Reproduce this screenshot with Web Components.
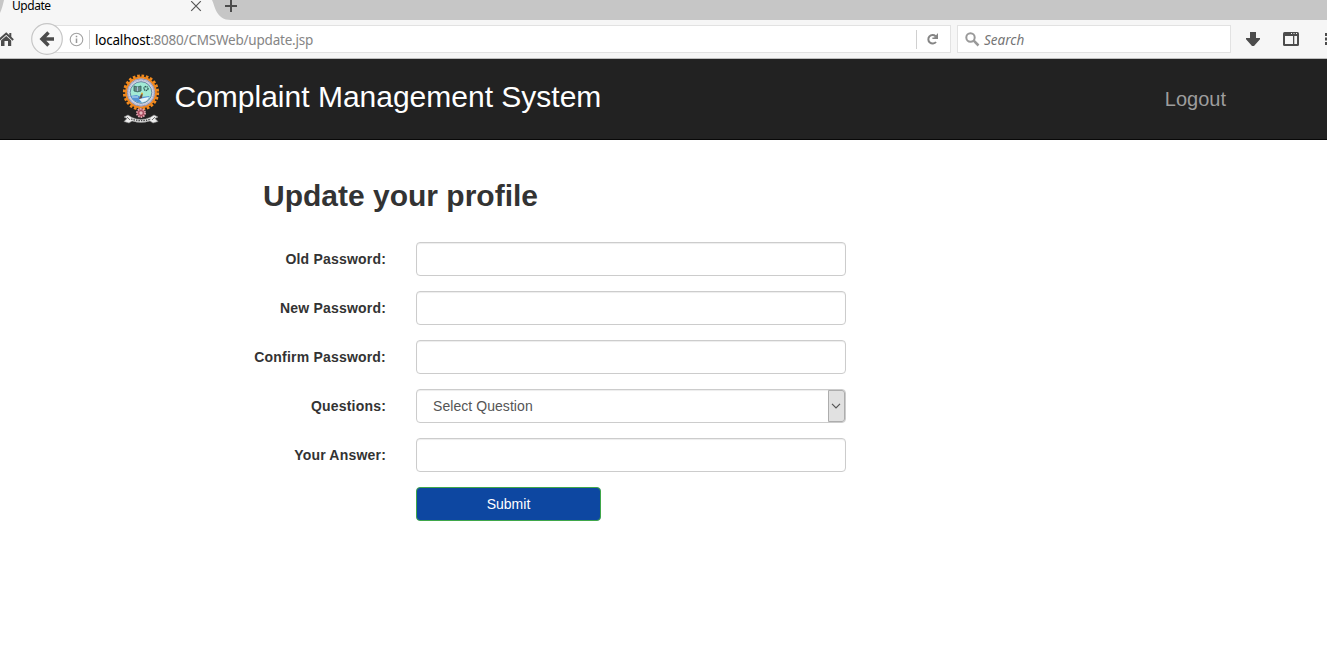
<!DOCTYPE html>
<html lang="en">
<head>
<meta charset="utf-8">
<title>Update</title>
<style>
html,body{margin:0;height:100%;overflow:hidden;background:#fff}
body{font-family:"Liberation Sans",Arial,sans-serif;color:#333}
</style>
</head>
<body>
<browser-window>
  <tab-strip slot="chrome" label="Update"></tab-strip>
  <address-bar slot="chrome" host="localhost" path=":8080/CMSWeb/update.jsp"></address-bar>
  <site-navbar><college-logo slot="logo"></college-logo>Complaint Management System<span slot="action">Logout</span></site-navbar>
  <profile-form>
    <span slot="title">Update your profile</span>
    <form-row label="Old Password:"><text-field></text-field></form-row>
    <form-row label="New Password:"><text-field></text-field></form-row>
    <form-row label="Confirm Password:"><text-field></text-field></form-row>
    <form-row label="Questions:"><select-field>Select Question</select-field></form-row>
    <form-row label="Your Answer:"><text-field></text-field></form-row>
    <form-row><submit-button>Submit</submit-button></form-row>
  </profile-form>
</browser-window>
<script>
const define = (name, render) => customElements.define(name, class extends HTMLElement {
  constructor() { super(); this.attachShadow({mode: 'open'}); }
  connectedCallback() { this.shadowRoot.innerHTML = '<style>:host,*{box-sizing:border-box}svg{display:block;flex:none}</style>' + render(this); }
});

define('browser-window', () => `
<style>:host{display:flex;flex-direction:column;height:666px;width:1327px;overflow:hidden}
main{flex:1;background:#fff}</style>
<slot name="chrome"></slot><main><slot></slot></main>`);

define('tab-strip', el => `
<style>
:host{display:grid;height:20px;background:#c6c6c6;font-family:"Noto Sans","Open Sans",sans-serif}
.shape,.row{grid-area:1/1}
.row{display:flex;height:20px}
.label{font-size:12px;line-height:12px;height:12px;color:#000;padding-left:12px;width:190px;letter-spacing:-.45px}
.close{margin-top:1px}.add{margin-left:22px}
</style>
<svg class="shape" width="250" height="20"><path d="M0 13C2 9 3 4 4 0H212C215 6 216 20 231 20H0Z" fill="#f6f6f6"/></svg>
<div class="row"><span class="label">${el.getAttribute('label')}</span>
<svg class="close" width="12" height="12"><path d="M1.2.2l9.6 9.6M10.8.2L1.2 9.800" stroke="#555" stroke-width="1.200"/></svg>
<svg class="add" width="14" height="14"><path d="M1 6h12M7 0v12" stroke="#4c4c4c" stroke-width="2"/></svg></div>`);

define('address-bar', el => `
<style>
:host{display:flex;align-items:center;height:39px;background:#f6f6f6;border-bottom:1px solid #bdbdbd;font-family:"Noto Sans","Open Sans",sans-serif;font-size:13.5px}
.home{margin-right:17px}
.back{z-index:1}
.url,.search{display:flex;align-items:center;height:28px;background:#fff;border:1px solid #e2e2e2}
.url{width:904px;margin-left:-16px;padding-left:21px;margin-right:6px;flex:none}
.sep{width:1px;height:19px;background:#d0d0d0;margin:0 5px 0 5px}
.text{flex:1;color:#858585;letter-spacing:-.21px;line-height:18px;padding-top:1px}
.host{color:#000}
.rsep{width:1px;height:19px;background:#d0d0d0}
.reload{margin:0 11px 0 9px}
.search{width:274px;padding-left:7px;color:#757575;font-style:italic;margin-right:15px;flex:none}
.search span{margin-left:4px;line-height:18px;padding-top:1px}
.side{margin-left:23px}
.edge{width:1px;height:38px;background:#dcdcdc;margin:0 13px 0 12px}
</style>
<svg class="home" width="14" height="16"><path d="M-1 9L6.200 2.500l7 6.500" fill="none" stroke="#4c4c4c" stroke-width="1.900"/><path d="M1 9.500L6.200 5l5 4.500V15H8v-5H4.500v5H1ZM9.300 2h2v5L9.300 5Z" fill="#4c4c4c"/></svg>
<svg class="back" width="32" height="32"><circle cx="16" cy="16" r="15.300" fill="#f8f8f8" stroke="#c6c6c6" stroke-width="1.200"/><path d="M17.500 9.500L11 16l6.500 6.500M11.500 16H23" fill="none" stroke="#4c4c4c" stroke-width="3.500"/></svg>
<div class="url">
<svg width="15" height="15"><circle cx="7.500" cy="7.500" r="6.300" fill="none" stroke="#a2a2a2" stroke-width="1.100"/><path d="M7.500 6.500v4.500M7.500 3.700v1.500" stroke="#999" stroke-width="1.500"/></svg>
<i class="sep"></i><span class="text"><span class="host">${el.getAttribute('host')}</span>${el.getAttribute('path')}</span>
<i class="rsep"></i><svg class="reload" width="13" height="14"><path d="M9.600 4.200A4.300 4.300 0 1 0 10 10" fill="none" stroke="#858585" stroke-width="2"/><path d="M12 1v6H6.400V5.500h1.800Z" fill="#858585"/></svg></div>
<div class="search"><svg width="15" height="15"><circle cx="5.500" cy="5.500" r="4.200" fill="none" stroke="#999" stroke-width="2"/><path d="M8.700 8.700L13.500 13.500" stroke="#999" stroke-width="2.500"/></svg><span>Search</span></div>
<svg width="14" height="14"><path d="M4 0h6v6h4v1.300L8 14H6L0 7.300V6h4Z" fill="#4c4c4c"/></svg>
<svg class="side" width="17" height="14"><rect width="16" height="14" rx="1.500" fill="#4c4c4c"/><path d="M2 4h8v8H2ZM11.300 4h2.700v8h-2.700Z" fill="#f6f6f6"/><path d="M8 1.500h1M10.500 1.500h1M13 1.500h1" stroke="#f6f6f6" stroke-width="1"/></svg>
<i class="edge"></i><svg width="4" height="14"><path d="M0 2.500h4M0 7h4M0 11.500h4" stroke="#4c4c4c" stroke-width="3"/></svg>`);

define('site-navbar', () => `
<style>
:host{display:flex;align-items:flex-start;height:81px;background:#222;border-bottom:1px solid #080808;padding:0 101px 0 120px}
.brand{flex:1;color:#fff;font-size:30px;line-height:36px;padding:20px 0 0 12.5px;white-space:nowrap}
::slotted([slot=logo]){margin-top:15px}
.action{color:#9d9d9d;font-size:20px;line-height:24px;padding-top:28px}
</style><slot name="logo"></slot><div class="brand"><slot></slot></div><div class="action"><slot name="action"></slot></div>`);

define('college-logo', () => `
<style>:host{display:block;width:42px;height:52px}</style>
<svg width="42" height="52">
<circle cx="21" cy="18.500" r="16.500" fill="none" stroke="#f28a1c" stroke-width="3.200" stroke-dasharray="2.600 1.720"/>
<circle cx="21" cy="18.500" r="14.900" fill="#d9dae9" stroke="#ed861f" stroke-width="2"/>
<circle cx="21" cy="18.500" r="13.600" fill="none" stroke="#7b80aa" stroke-width=".8"/>
<circle cx="21" cy="18.500" r="12.300" fill="none" stroke="#a4a9c2" stroke-width="1" stroke-dasharray="1 .7"/>
<circle cx="21" cy="18.500" r="10.800" fill="#a2ead5" stroke="#536d91" stroke-width=".8"/>
<path d="M14 12l3.500 1 3.500-1v5l-3.500.800L14 17Z" fill="#658b83" stroke="#315c59" stroke-width=".8"/><path d="M17.500 13v4" stroke="#abd"/>
<circle cx="26" cy="14.500" r="2" fill="none" stroke="#315c59" stroke-width="1.400" stroke-dasharray="1.300 .5"/>
<path d="M10.500 22l6-1 5 2 8-1c-1 4-4 6.500-8.500 6.500S12 26 10.500 22Z" fill="#5493d6"/><path d="M19 25l10-2c-1 3-3 5-7 5.500Z" fill="#e5f5fa"/><path d="M12 23h6" stroke="#e5f5fa" stroke-width=".8"/>
<path d="M21 20l2-1-1 5-3 1Z" fill="#6b4b39"/><circle cx="22" cy="19.500" r="1" fill="#e0b23a"/>
<circle cx="21" cy="39" r="4" fill="#a64a5d" stroke="#dda0ac" stroke-width="2" stroke-dasharray="1.500 1"/><circle cx="21" cy="39" r="1.700" fill="#e9b7bf"/>
<path d="M4 43l4-2 4 2.500q9 4 18 0l4-2.500 4 2-3 1.500 3 3-5 1.500-3-2q-9 3-18 0l-3 2-5-1.500 3-3Z" fill="#eee" stroke="#888" stroke-width=".6"/>
<path d="M11 45q10 3.300 20 0" fill="none" stroke="#444" stroke-width="1.300" stroke-dasharray="1.500 1"/><path d="M7 43l3 3M35 43l-3 3" stroke="#777"/>
</svg>`);

define('profile-form', () => `
<style>
:host{display:block;padding:38px 0 0 231px}
h2{margin:0 0 28px 32px;font-size:30px;line-height:36px;font-weight:bold;color:#333}
form{display:flex;flex-direction:column;gap:15px}
</style><h2><slot name="title"></slot></h2><form><slot></slot></form>`);

define('form-row', el => `
<style>
:host{display:grid;grid-template-columns:155px 430px;column-gap:30px;height:34px}
label{font-weight:bold;font-size:14px;line-height:34px;text-align:right;letter-spacing:.2px}
</style><label>${el.getAttribute('label') || ''}</label><slot></slot>`);

define('text-field', () => `
<style>:host{display:block}
input{display:block;width:100%;height:34px;border:1px solid #ccc;border-radius:4px;background:#fff;box-shadow:inset 0 1px 1px rgba(0,0,0,.075);padding:6px 12px;font:14px "Liberation Sans",sans-serif}</style>
<input type="text">`);

define('select-field', () => `
<style>:host{display:flex;height:34px;border:1px solid #ccc;border-radius:4px;box-shadow:inset 0 1px 1px rgba(0,0,0,.075);font-size:14px;line-height:32px;color:#555;padding-left:16px}
.value{flex:1;letter-spacing:.06px}
.arrow{width:17px;display:flex;align-items:center;padding-left:2px;background:#e1e1e1;border:1px solid #adadad;border-radius:0 3px 3px 0}</style>
<span class="value"><slot></slot></span><span class="arrow"><svg width="10" height="6"><path d="M1 .8l4 4 4-4" fill="none" stroke="#555" stroke-width="1.200"/></svg></span>`);

define('submit-button', () => `
<style>:host{display:block}button{display:block;width:185px;height:34px;padding:0;border:1px solid #3fa74a;border-radius:4px;background:#0d47a1;color:#fff;font:14px/20px "Liberation Sans",sans-serif}</style>
<button type="button"><slot></slot></button>`);
</script>
</body>
</html>
